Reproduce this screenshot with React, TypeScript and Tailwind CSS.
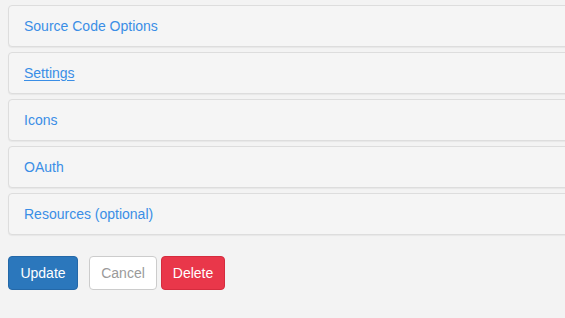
const sections = [
  { label: "Source Code Options" },
  { label: "Settings", active: true },
  { label: "Icons" },
  { label: "OAuth" },
  { label: "Resources (optional)" },
];

export default function App() {
  return (
    <div
      className="w-[565px] h-[318px] overflow-hidden bg-[#f3f3f3] pl-2 pt-[5px] text-[14px]"
      style={{ fontFamily: '"Liberation Sans", Arial, sans-serif' }}
    >
      <div className="w-[600px] flex flex-col gap-[5px]">
        {sections.map(s => (
          <div
            key={s.label}
            className="h-[42px] flex items-center px-[15px] bg-[#f5f5f5] border border-[#dddddd] rounded-[4px] shadow-[0_1px_1px_rgba(0,0,0,0.05)]"
          >
            <a
              href="#"
              className={
                s.active
                  ? "text-[#3a8ee6] underline underline-offset-2"
                  : "text-[#3a8ee6] no-underline"
              }
            >
              {s.label}
            </a>
          </div>
        ))}
      </div>

      <div className="flex items-center mt-[21px]">
        <button className="h-[34px] w-[70px] rounded-[4px] bg-[#2b77bc] border border-[#2468a8] text-white">
          Update
        </button>
        <button className="ml-[11px] h-[34px] w-[68px] rounded-[4px] bg-white border border-[#cccccc] text-[#9a9a9a]">
          Cancel
        </button>
        <button className="ml-[4px] h-[34px] w-[64px] rounded-[4px] bg-[#e9374a] border border-[#d52c3e] text-white">
          Delete
        </button>
      </div>
    </div>
  );
}
